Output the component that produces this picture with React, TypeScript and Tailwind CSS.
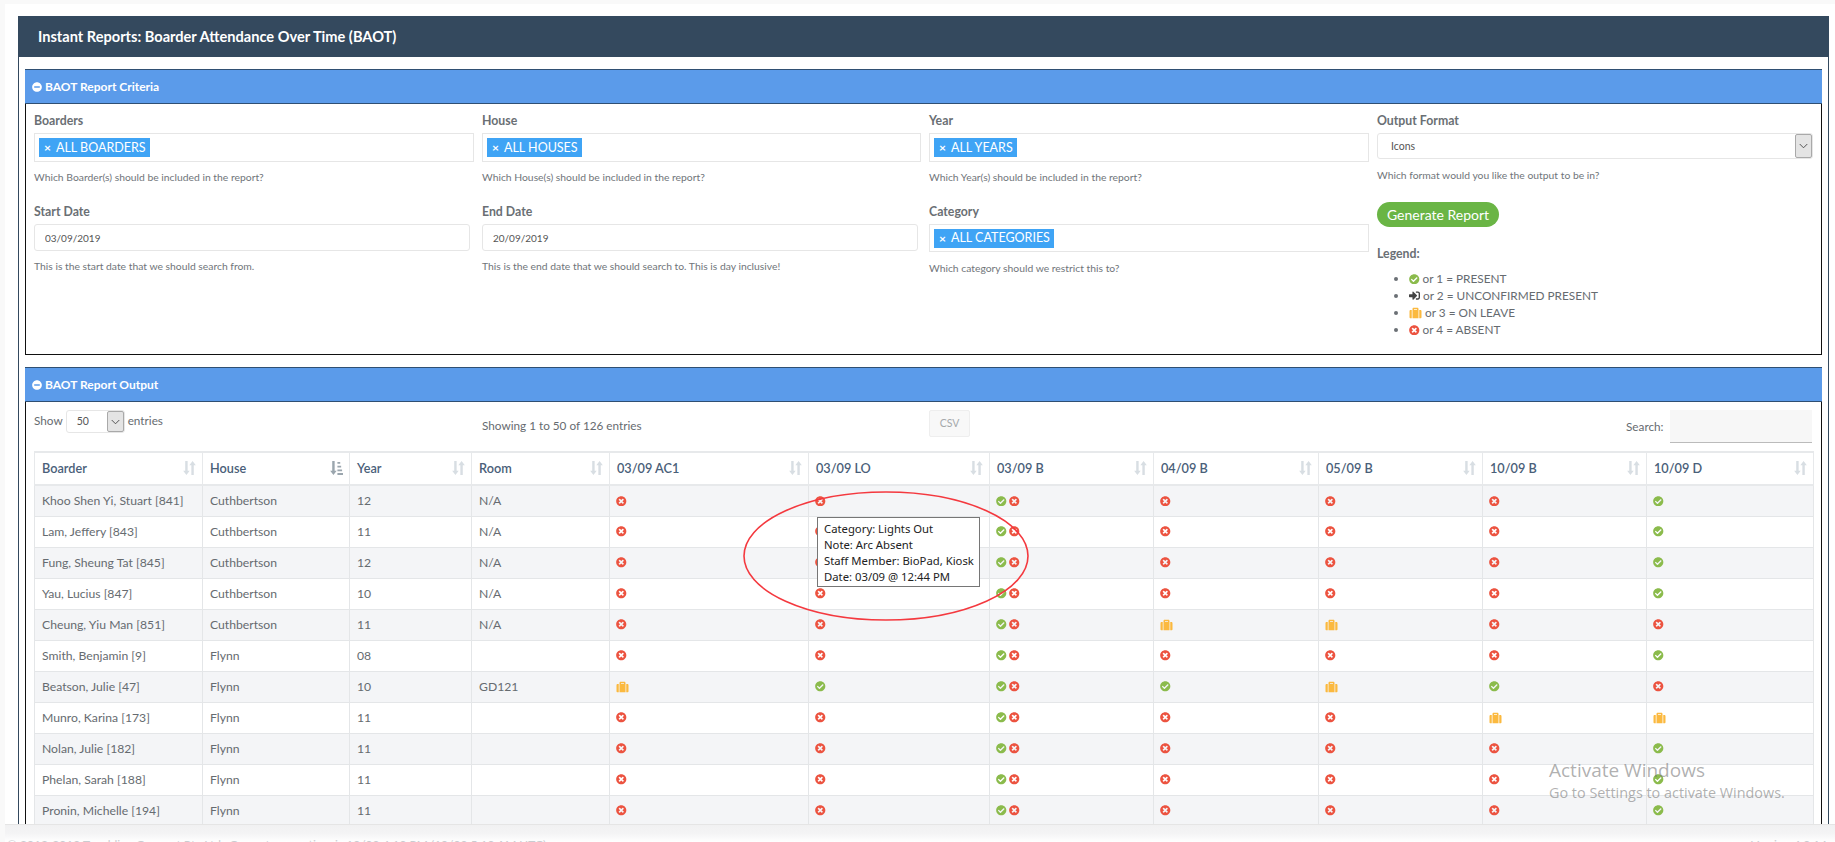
import React from "react";
import { FaCheckCircle, FaTimesCircle, FaSuitcase, FaSignInAlt, FaMinusCircle } from "react-icons/fa";

const Yes = () => <FaCheckCircle className="inline-block text-[#8bbb4c] w-[10.5px] h-[10.5px] align-[-1px]" />;
const No = () => <FaTimesCircle className="inline-block text-[#ec5340] w-[10.5px] h-[10.5px] align-[-1px]" />;
const Leave = () => <FaSuitcase className="inline-block text-[#fbb93f] w-[13px] h-[12px] align-[-2px]" />;

function SortIcon() {
  return (
    <svg viewBox="0 0 14 15" className="w-[13px] h-[14px] shrink-0 text-[#d8dee3]" fill="currentColor">
      <path d="M2.4 0h2.6v10.5h2.2L3.7 15 .2 10.5h2.2z" />
      <path d="M9 15h2.6V4.5h2.2L10.3 0 6.8 4.5H9z" />
    </svg>
  );
}

function SortAmountIcon() {
  return (
    <svg viewBox="0 0 14 15" className="w-[13px] h-[14px] shrink-0 text-[#9ba6ae]" fill="currentColor">
      <path d="M2.4 0h2.6v10.5h2.2L3.7 15 .2 10.5h2.2z" />
      <path d="M8 1h3v2H8zM8 5h4v2H8zM8 9h5v2H8zM8 13h6v2H8z" />
    </svg>
  );
}

function Chip({ label }: { label: string }) {
  return (
    <span className="inline-flex items-center h-[19px] bg-[#3fa4f5] text-white text-[12.5px] pl-[5px] pr-[4px] pt-px">
      <span className="mr-[5px] text-[12px] font-bold">×</span>
      {label}
    </span>
  );
}

function Label({ children }: { children: React.ReactNode }) {
  return <div className="text-[12.3px] font-bold text-[#6a6f74] h-[20px] leading-[16px]">{children}</div>;
}

function Help({ children }: { children: React.ReactNode }) {
  return <div className="text-[10.35px] text-[#70757a] leading-[14px]">{children}</div>;
}

function TagField({ label, chip, help, tall = true }: { label: string; chip: string; help: string; tall?: boolean }) {
  return (
    <div>
      <Label>{label}</Label>
      <div className={tall ? "h-[29px] border border-[#e6e6e6] flex items-center pl-[4px] mb-[8px]" : "h-[28px] border border-[#e6e6e6] flex items-center pl-[4px] mb-[9px]"}>
        <Chip label={chip} />
      </div>
      <Help>{help}</Help>
    </div>
  );
}

function DateField({ label, value, help }: { label: string; value: string; help: string }) {
  return (
    <div>
      <Label>{label}</Label>
      <input
        readOnly
        value={value}
        className="block w-[436px] h-[27px] border border-[#e6e6e6] rounded-[3px] px-[10px] text-[10px] text-[#555] mb-[8px] outline-none"
      />
      <Help>{help}</Help>
    </div>
  );
}

function FakeSelect({ value, cls, btn }: { value: string; cls: string; btn: string }) {
  return (
    <div className={`flex items-center justify-between border border-[#e6e6e6] rounded-[3px] text-[10.5px] text-[#555] ${cls}`}>
      <span className="pt-px">{value}</span>
      <span className={`flex items-center justify-center h-full bg-[#e4e4e4] border border-[#a9a9a9] rounded-[2px] ${btn}`}>
        <svg viewBox="0 0 10 6" className="w-[9px] h-[6px]" fill="none" stroke="#444" strokeWidth="1">
          <path d="M.8.8 5 5 9.2.8" />
        </svg>
      </span>
    </div>
  );
}

function PanelHeader({ title }: { title: string }) {
  return (
    <div className="h-[35px] bg-[#5b9bea] border-y border-[#2f4f73] flex items-center pl-[7px] text-white text-[12px] font-bold">
      <FaMinusCircle className="w-[10px] h-[10px] mr-[3px]" />
      {title}
    </div>
  );
}

type C = "x" | "c" | "l" | "cx";
const rows: { n: string; h: string; y: string; r: string; c: C[] }[] = [
  { n: "Khoo Shen Yi, Stuart [841]", h: "Cuthbertson", y: "12", r: "N/A", c: ["x", "x", "cx", "x", "x", "x", "c"] },
  { n: "Lam, Jeffery [843]", h: "Cuthbertson", y: "11", r: "N/A", c: ["x", "x", "cx", "x", "x", "x", "c"] },
  { n: "Fung, Sheung Tat [845]", h: "Cuthbertson", y: "12", r: "N/A", c: ["x", "x", "cx", "x", "x", "x", "c"] },
  { n: "Yau, Lucius [847]", h: "Cuthbertson", y: "10", r: "N/A", c: ["x", "x", "cx", "x", "x", "x", "c"] },
  { n: "Cheung, Yiu Man [851]", h: "Cuthbertson", y: "11", r: "N/A", c: ["x", "x", "cx", "l", "l", "x", "x"] },
  { n: "Smith, Benjamin [9]", h: "Flynn", y: "08", r: "", c: ["x", "x", "cx", "x", "x", "x", "c"] },
  { n: "Beatson, Julie [47]", h: "Flynn", y: "10", r: "GD121", c: ["l", "c", "cx", "c", "l", "c", "x"] },
  { n: "Munro, Karina [173]", h: "Flynn", y: "11", r: "", c: ["x", "x", "cx", "x", "x", "l", "l"] },
  { n: "Nolan, Julie [182]", h: "Flynn", y: "11", r: "", c: ["x", "x", "cx", "x", "x", "x", "c"] },
  { n: "Phelan, Sarah [188]", h: "Flynn", y: "11", r: "", c: ["x", "x", "cx", "x", "x", "x", "c"] },
  { n: "Pronin, Michelle [194]", h: "Flynn", y: "11", r: "", c: ["x", "x", "cx", "x", "x", "x", "c"] },
];

const heads = ["Boarder", "House", "Year", "Room", "03/09 AC1", "03/09 LO", "03/09 B", "04/09 B", "05/09 B", "10/09 B", "10/09 D"];

function Cell({ v }: { v: C }) {
  if (v === "x") return <No />;
  if (v === "c") return <Yes />;
  if (v === "l") return <Leave />;
  return (
    <span className="inline-flex gap-[2.5px] items-center align-[-1px]">
      <Yes />
      <No />
    </span>
  );
}

export default function App() {
  return (
    <div className="relative w-[1835px] h-[842px] overflow-hidden bg-[#f9f9f9] pt-[4px] pl-[5px] font-[Lato,sans-serif] text-[#666b70]">
      <div className="h-[820px] bg-white pt-[12px] pl-[13px] overflow-hidden">
        <div className="w-[1811px] h-[900px] border-x border-[#34495e] ">
          <div className="h-[41px] bg-[#34495e] flex items-center pl-[19px] text-white text-[14.6px] font-bold">
            Instant Reports: Boarder Attendance Over Time (BAOT)
          </div>

          <div className="ml-[6px] w-[1797px] mt-[12px]">
            <PanelHeader title="BAOT Report Criteria" />
            <div className="h-[251px] border-x border-b border-[#111] grid grid-cols-[448px_447px_448px_452px]">
              <div className="pl-[8px] pt-[9px] flex flex-col gap-[20px]">
                <TagField label="Boarders" chip="ALL BOARDERS" help="Which Boarder(s) should be included in the report?" />
                <DateField label="Start Date" value="03/09/2019" help="This is the start date that we should search from." />
              </div>
              <div className="pl-[8px] pt-[9px] flex flex-col gap-[20px]">
                <TagField label="House" chip="ALL HOUSES" help="Which House(s) should be included in the report?" />
                <DateField label="End Date" value="20/09/2019" help="This is the end date that we should search to. This is day inclusive!" />
              </div>
              <div className="pl-[8px] pt-[9px] flex flex-col gap-[20px]">
                <TagField label="Year" chip="ALL YEARS" help="Which Year(s) should be included in the report?" />
                <TagField label="Category" chip="ALL CATEGORIES" tall={false} help="Which category should we restrict this to?" />
              </div>
              <div className="pl-[8px] pr-[8px] pt-[9px]">
                <Label>Output Format</Label>
                <FakeSelect value="Icons" cls="h-[26px] pl-[13px] mb-[9px]" btn="w-[17px]" />
                <Help>Which format would you like the output to be in?</Help>
                <button className="block mt-[20px] w-[122px] h-[25px] rounded-full bg-[#6ab545] text-white text-[14px]">
                  Generate Report
                </button>
                <div className="mt-[17px] text-[12.3px] font-bold text-[#6a6f74] leading-[20px]">Legend:</div>
                <ul className="list-disc pl-[32px] mt-[6px] text-[11.8px] leading-[17px] marker:text-[#6b7075]">
                  <li><Yes /> or 1 = PRESENT</li>
                  <li><FaSignInAlt className="inline-block text-[#444] w-[11px] h-[11px] align-[-1px]" /> or 2 = UNCONFIRMED PRESENT</li>
                  <li><Leave /> or 3 = ON LEAVE</li>
                  <li><No /> or 4 = ABSENT</li>
                </ul>
              </div>
            </div>

            <div className="mt-[12px]">
              <PanelHeader title="BAOT Report Output" />
              <div className="h-[500px] border-x border-[#111] pl-[8px] pr-[8px]">
                <div className="h-[49px] flex items-start text-[11.75px]">
                  <div className="w-[448px] flex items-start pt-[8px]">
                    <span className="leading-[22px]">Show</span>
                    <FakeSelect value="50" cls="ml-[3px] w-[59px] h-[23px] pl-[10px]" btn="w-[17px]" />
                    <span className="ml-[3px] leading-[22px]">entries</span>
                  </div>
                  <div className="w-[447px] pt-[15px] leading-[18px]">Showing 1 to 50 of 126 entries</div>
                  <div className="pt-[8px] w-[697px]">
                    <div className="w-[41px] h-[27px] bg-[#f8f8f8] border border-[#eeeeee] rounded-[2px] flex items-center justify-center text-[10.5px] text-[#a5a8ab]">
                      CSV
                    </div>
                  </div>
                  <div className="pt-[16px] leading-[18px]">Search:</div>
                  <div className="ml-[6px] mt-[8px] w-[142px] h-[33px] bg-[#f7f7f7] border-b border-[#bbbbbb]" />
                </div>
                <table className="table-fixed border-collapse w-[1779px] text-[12.2px]">
                  <colgroup>
                    <col className="w-[168px]" />
                    <col className="w-[147px]" />
                    <col className="w-[122px]" />
                    <col className="w-[138px]" />
                    <col className="w-[199px]" />
                    <col className="w-[181px]" />
                    <col className="w-[164px]" />
                    <col className="w-[165px]" />
                    <col className="w-[164px]" />
                    <col className="w-[164px]" />
                    <col className="w-[167px]" />
                  </colgroup>
                  <thead>
                    <tr className="h-[33px]">
                      {heads.map((h, i) => (
                        <th key={h} className="border border-[#e7e9eb] border-b-2 border-t-2 pl-[7px] pr-[6px] text-left text-[12.7px] font-semibold text-[#4a6079]">
                          <div className="flex items-center justify-between">
                            {h}
                            {i === 1 ? <SortAmountIcon /> : <SortIcon />}
                          </div>
                        </th>
                      ))}
                    </tr>
                  </thead>
                  <tbody>
                    {rows.map((r, i) => (
                      <tr key={r.n} className={`h-[31px] ${i % 2 === 0 ? "bg-[#f4f5f7]" : "bg-white"}`}>
                        <td className="border border-[#e4e6e8] pl-[7px] pt-[1px]">{r.n}</td>
                        <td className="border border-[#e4e6e8] pl-[7px] pt-[1px]">{r.h}</td>
                        <td className="border border-[#e4e6e8] pl-[7px] pt-[1px]">{r.y}</td>
                        <td className="border border-[#e4e6e8] pl-[7px] pt-[1px]">{r.r}</td>
                        {r.c.map((v, j) => (
                          <td key={j} className="border border-[#e4e6e8] pl-[6px] pt-[1px]">
                            <Cell v={v} />
                          </td>
                        ))}
                      </tr>
                    ))}
                  </tbody>
                </table>
              </div>
            </div>
          </div>
        </div>
      </div>

      <div className="h-[18px] border-t border-[#e5e5e5] bg-gradient-to-b from-[#f1f1f2] via-[#f4f4f5] to-white flex justify-between pl-[2px] pr-[8px] text-[12px] text-[#c9ccd0] pt-[12px] leading-[16px] whitespace-nowrap">
        <span>© 2013-2019 Touchline Connect Pty Ltd., Current server time is 10/09 4:10 PM (10/09 5:10 AM UTC)</span>
        <span>Version 4.0.14</span>
      </div>

      <svg className="absolute left-[740px] top-[488px] w-[292px] h-[136px]" viewBox="0 0 292 136" fill="none">
        <ellipse cx="146" cy="68" rx="142" ry="64" stroke="#f4393f" strokeWidth="1.6" />
      </svg>
      <div className="absolute left-[817px] top-[517px] w-[163px] h-[70px] bg-white border border-[#767676] pl-[6px] pt-[3px] text-[11.3px] leading-[16px] text-[#222] font-['Noto_Sans',sans-serif] whitespace-nowrap">
        <div>Category: Lights Out</div>
        <div>Note: Arc Absent</div>
        <div>Staff Member: BioPad, Kiosk</div>
        <div>Date: 03/09 @ 12:44 PM</div>
      </div>

      <div className="absolute left-[1549px] top-[757px] font-['Open_Sans',sans-serif] text-[rgba(110,110,110,0.55)] whitespace-nowrap">
        <div className="text-[19px] leading-[26px]">Activate Windows</div>
        <div className="text-[14.4px] leading-[20px]">Go to Settings to activate Windows.</div>
      </div>
    </div>
  );
}
